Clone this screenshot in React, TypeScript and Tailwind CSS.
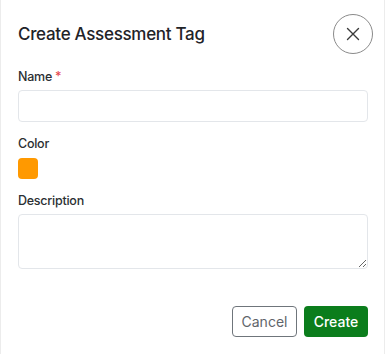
import React, { useState } from "react";

export default function App() {
  const [name, setName] = useState("");
  const [description, setDescription] = useState("");

  return (
    <div className="w-[385px] h-[354px] bg-white border-x border-[#ececec] font-['Inter',sans-serif] text-[#1f2328]">
      <div className="flex items-center justify-between pl-[17px] pr-[11px] pt-[14px]">
        <h2 className="text-[17px] font-medium leading-[24px] tracking-[-0.3px]">Create Assessment Tag</h2>
        <button className="w-[40px] h-[40px] rounded-full border border-[#8a8a8a] flex items-center justify-center text-[#3a3a3a]">
          <svg width="14" height="14" viewBox="0 0 14 14" fill="none" stroke="currentColor" strokeWidth="1.4" strokeLinecap="round">
            <path d="M1.5 1.5L12.5 12.5M12.5 1.5L1.5 12.5" />
          </svg>
        </button>
      </div>

      <div className="pl-[17px] pr-[16px] mt-[16px]">
        <label className="block text-[12.5px] font-medium leading-[14px] tracking-[-0.25px] text-[#2b2f33]">
          Name <span className="text-[#e5484d]">*</span>
        </label>
        <input
          value={name}
          onChange={e => setName(e.target.value)}
          className="mt-[6px] block w-full h-[32px] rounded-[4px] border border-[#e3e6ea] px-2 text-sm outline-none"
        />

        <label className="block mt-[13px] text-[12.5px] font-medium leading-[18px] tracking-[-0.25px] text-[#2b2f33]">Color</label>
        <div className="mt-[5px] w-[20px] h-[21px] rounded-[4px] bg-[#ff9900]" />

        <label className="block mt-[13px] text-[12.5px] font-medium leading-[18px] tracking-[-0.25px] text-[#2b2f33]">Description</label>
        <textarea
          value={description}
          onChange={e => setDescription(e.target.value)}
          className="mt-[4px] block w-full h-[55px] rounded-[4px] border border-[#e3e6ea] px-2 py-1 text-sm outline-none"
        />

        <div className="flex justify-end gap-[7px] mt-[37px]">
          <button className="h-[31px] w-[65px] rounded-[4px] border border-[#6f757b] text-[#5f656b] text-[14px]">
            Cancel
          </button>
          <button className="h-[31px] w-[64px] rounded-[4px] bg-[#0b7d1c] text-white text-[14px] font-medium">
            Create
          </button>
        </div>
      </div>
    </div>
  );
}
